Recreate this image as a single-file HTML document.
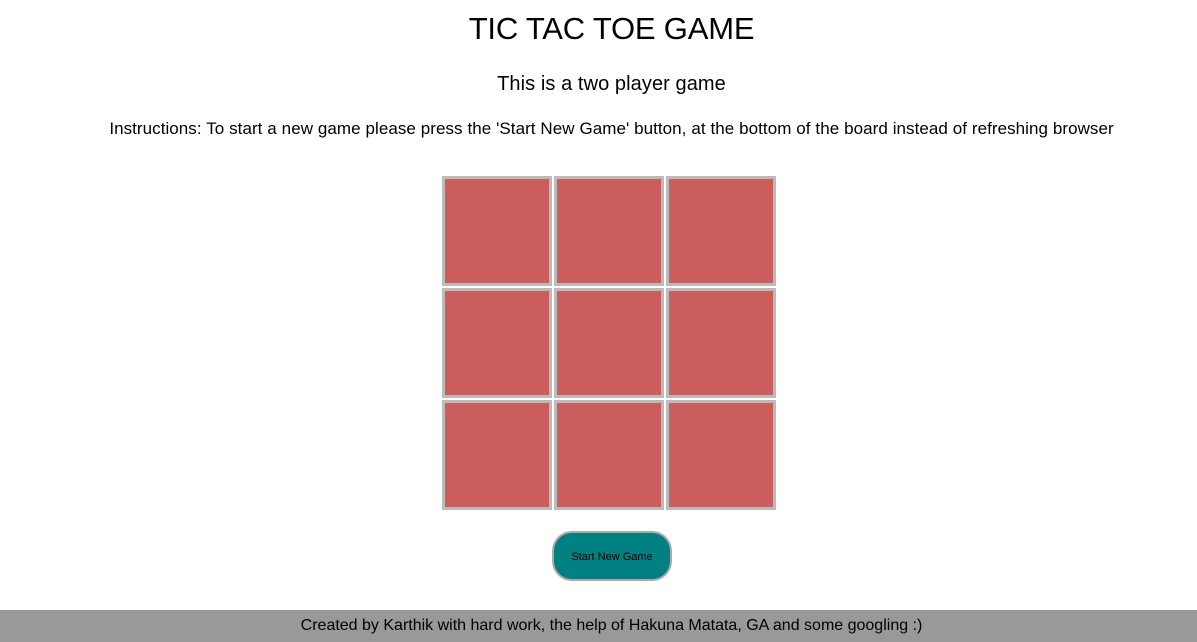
<!DOCTYPE html>
<html><head><style>
body{margin:0;width:1197px;height:642px;position:relative;background:#fff;font-family:"Liberation Sans",sans-serif;overflow:hidden}
.t{position:absolute;left:0;width:1223px;text-align:center;color:#000}
.cell{position:absolute;width:104px;height:104px;border:3px solid #bbb;background:#cb5d5c}
</style></head><body>
<div class="t" style="top:11px;font-size:31px;letter-spacing:-0.2px">TIC TAC TOE GAME</div>
<div class="t" style="top:73px;font-size:20px;letter-spacing:0.08px">This is a two player game</div>
<div class="t" style="top:119px;font-size:17px;letter-spacing:0.05px;word-spacing:0.1px">Instructions: To start a new game please press the 'Start New Game' button, at the bottom of the board instead of refreshing browser</div>
<div class="cell" style="left:442px;top:176px"></div>
<div class="cell" style="left:554px;top:176px"></div>
<div class="cell" style="left:666px;top:176px"></div>
<div class="cell" style="left:442px;top:288px"></div>
<div class="cell" style="left:554px;top:288px"></div>
<div class="cell" style="left:666px;top:288px"></div>
<div class="cell" style="left:442px;top:400px"></div>
<div class="cell" style="left:554px;top:400px"></div>
<div class="cell" style="left:666px;top:400px"></div>
<div style="position:absolute;left:552px;top:531px;width:116px;height:46px;border:2px solid #aaa;border-radius:20px;background:#008080;font-size:11px;line-height:48px;text-align:center;color:#000">Start New Game</div>
<div style="position:absolute;left:0;top:610px;width:1197px;height:32px;background:#999;"></div>
<div class="t" style="top:610px;font-size:16px;line-height:32px;">Created by Karthik with hard work, the help of Hakuna Matata, GA and some googling :)</div>
</body></html>
